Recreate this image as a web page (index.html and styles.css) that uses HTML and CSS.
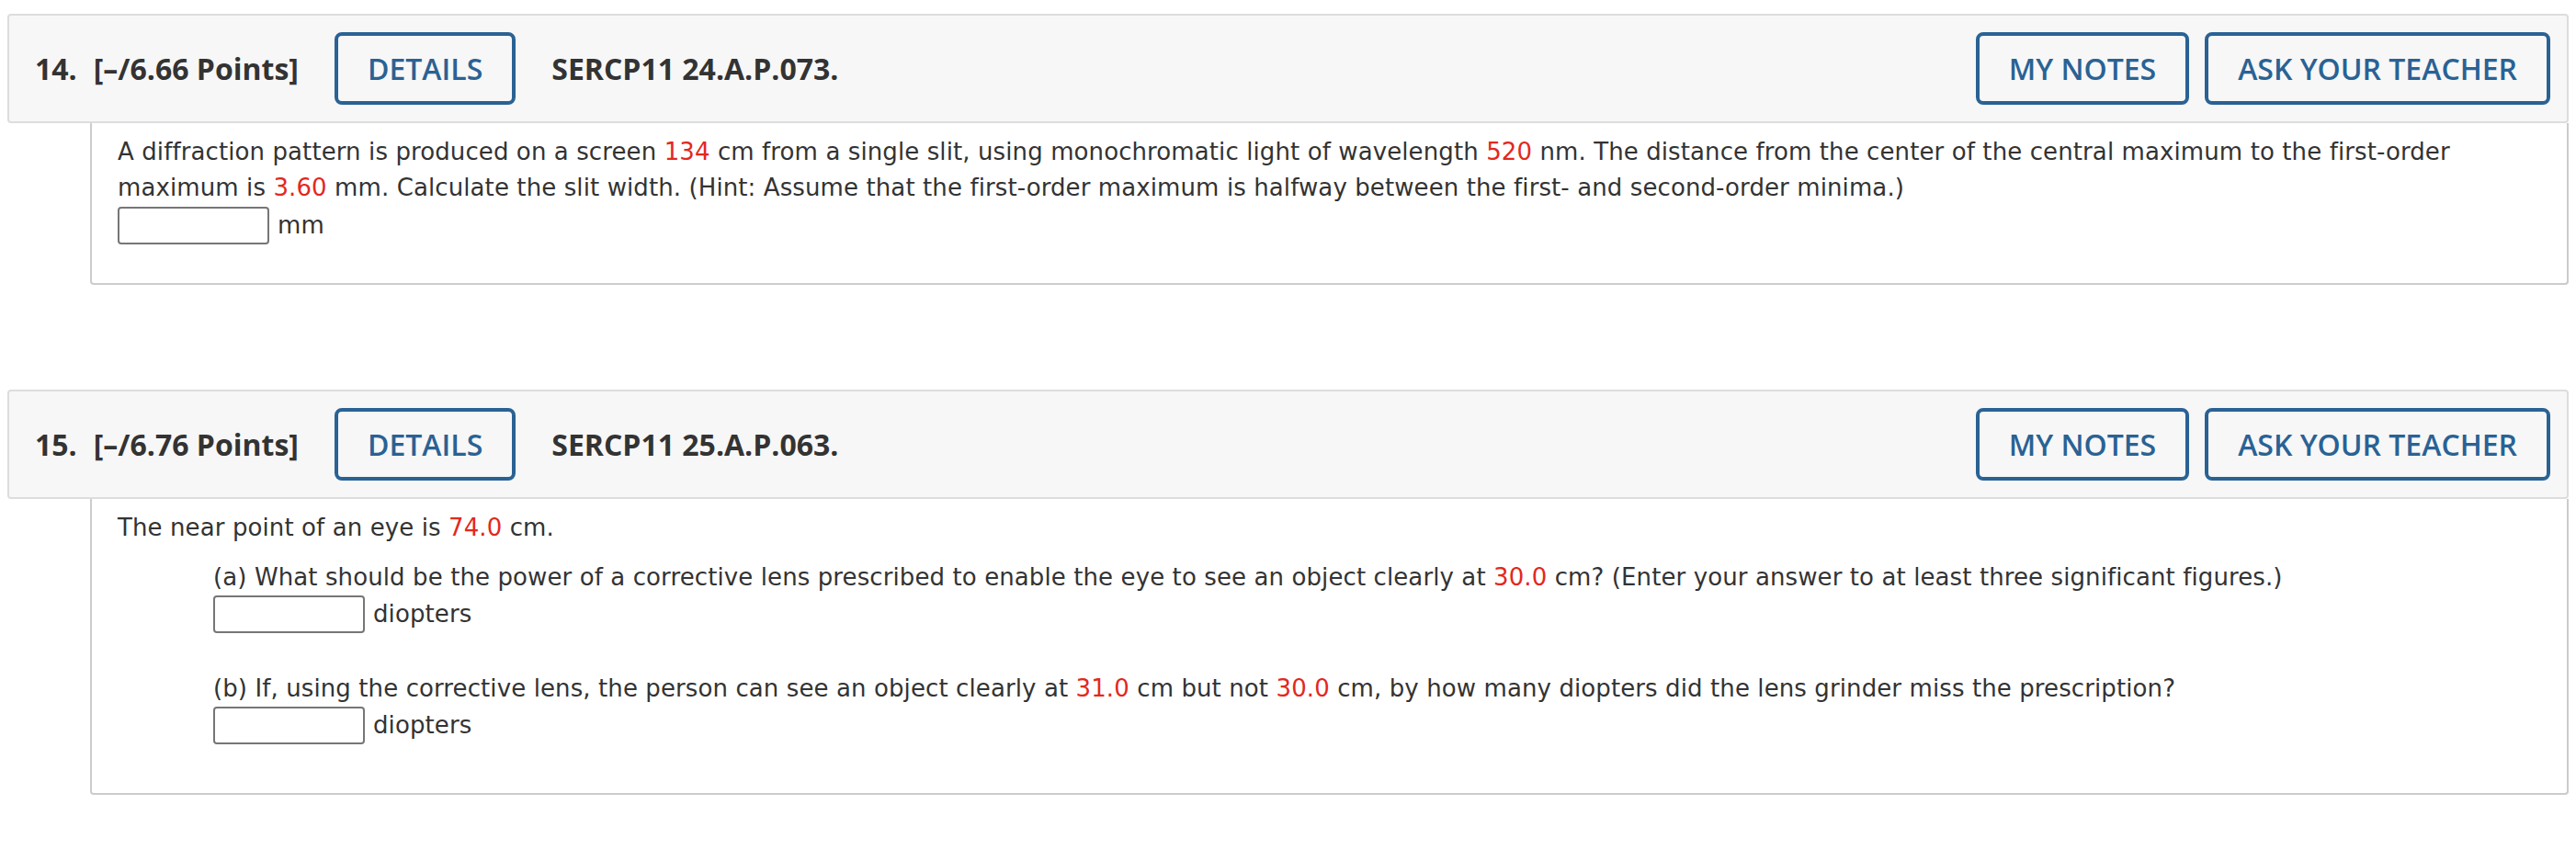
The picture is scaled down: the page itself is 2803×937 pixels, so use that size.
FILE: index.html
```html
<!DOCTYPE html>
<html lang="en">
<head>
<meta charset="utf-8">
<title>Questions</title>
<link rel="stylesheet" href="styles.css">
</head>
<body>
<div class="page">
  <section class="question q14">
    <header class="q-header">
      <span class="q-num">14.</span>
      <span class="q-points">[–/6.66 Points]</span>
      <button class="btn btn-details" type="button">DETAILS</button>
      <span class="q-code">SERCP11 24.A.P.073.</span>
      <div class="q-actions">
        <button class="btn" type="button">MY NOTES</button>
        <button class="btn" type="button">ASK YOUR TEACHER</button>
      </div>
    </header>
    <div class="q-body">
      <p class="q-text">A diffraction pattern is produced on a screen <span class="val">134</span> cm from a single slit, using monochromatic light of wavelength <span class="val">520</span> nm. The distance from the center of the central maximum to the first-order maximum is <span class="val">3.60</span> mm. Calculate the slit width. (Hint: Assume that the first-order maximum is halfway between the first- and second-order minima.)</p>
      <div class="answer-row first"><input class="answer" type="text"><span class="unit">mm</span></div>
    </div>
  </section>

  <section class="question q15">
    <header class="q-header">
      <span class="q-num">15.</span>
      <span class="q-points">[–/6.76 Points]</span>
      <button class="btn btn-details" type="button">DETAILS</button>
      <span class="q-code">SERCP11 25.A.P.063.</span>
      <div class="q-actions">
        <button class="btn" type="button">MY NOTES</button>
        <button class="btn" type="button">ASK YOUR TEACHER</button>
      </div>
    </header>
    <div class="q-body">
      <p class="q-text">The near point of an eye is <span class="val">74.0</span> cm.</p>
      <div class="part part-a">
        <p class="q-text">(a) What should be the power of a corrective lens prescribed to enable the eye to see an object clearly at <span class="val">30.0</span> cm? (Enter your answer to at least three significant figures.)</p>
        <div class="answer-row"><input class="answer" type="text"><span class="unit">diopters</span></div>
      </div>
      <div class="part part-b">
        <p class="q-text">(b) If, using the corrective lens, the person can see an object clearly at <span class="val">31.0</span> cm but not <span class="val">30.0</span> cm, by how many diopters did the lens grinder miss the prescription?</p>
        <div class="answer-row"><input class="answer" type="text"><span class="unit">diopters</span></div>
      </div>
    </div>
  </section>
</div>
</body>
</html>
```

FILE: styles.css
```css
html, body {
  margin: 0;
  padding: 0;
  background: #ffffff;
}

body {
  font-family: "DejaVu Sans", Verdana, sans-serif;
  color: #333333;
}

.page {
  padding: 15px 8px 0 8px;
}

.question {
  margin-bottom: 114px;
}

.q-header {
  display: flex;
  align-items: center;
  background: #f7f7f7;
  border: 2px solid #dddddd;
  border-radius: 4px;
  padding: 18px 18px 18px 28px;
  font-family: "Open Sans", "Liberation Sans", sans-serif;
  font-size: 32px;
  color: #333333;
}

.q-num {
  font-weight: 700;
  margin-right: 18px;
}

.q-points {
  font-weight: 700;
}

.q-code {
  font-weight: 700;
  margin-left: 39px;
}

.btn {
  box-sizing: border-box;
  height: 79px;
  display: inline-flex;
  align-items: center;
  justify-content: center;
  padding: 0 32px;
  margin: 0;
  background: transparent;
  border: 4px solid #2a6294;
  border-radius: 8px;
  font-family: "Open Sans", "Liberation Sans", sans-serif;
  font-weight: 600;
  font-size: 32px;
  line-height: 44px;
  color: #2a6294;
}

.btn-details {
  margin-left: 39px;
}

.q-actions {
  margin-left: auto;
  display: flex;
  gap: 17px;
}

.q-body {
  margin-left: 90px;
  border: 2px solid #cccccc;
  border-top: none;
  border-radius: 0 0 4px 4px;
  padding: 12px 28px 42px 28px;
  font-size: 26px;
  letter-spacing: 0.1px;
}

.q-text {
  margin: 0;
  line-height: 39px;
}

.val {
  color: #e3281d;
}

.answer-row {
  display: flex;
  align-items: center;
  gap: 9px;
  line-height: 39px;
}

.answer-row.first {
  margin-top: 1px;
}

.answer {
  box-sizing: border-box;
  width: 165px;
  height: 41px;
  margin: 0;
  padding: 0 6px;
  border: 2px solid #767676;
  border-radius: 4px;
  background: #ffffff;
  font-family: "DejaVu Sans", Verdana, sans-serif;
  font-size: 26px;
}

.part {
  margin-left: 104px;
}

.part-a {
  margin-top: 15px;
}

.part-b {
  margin-top: 41px;
  margin-bottom: 11px;
}
```
